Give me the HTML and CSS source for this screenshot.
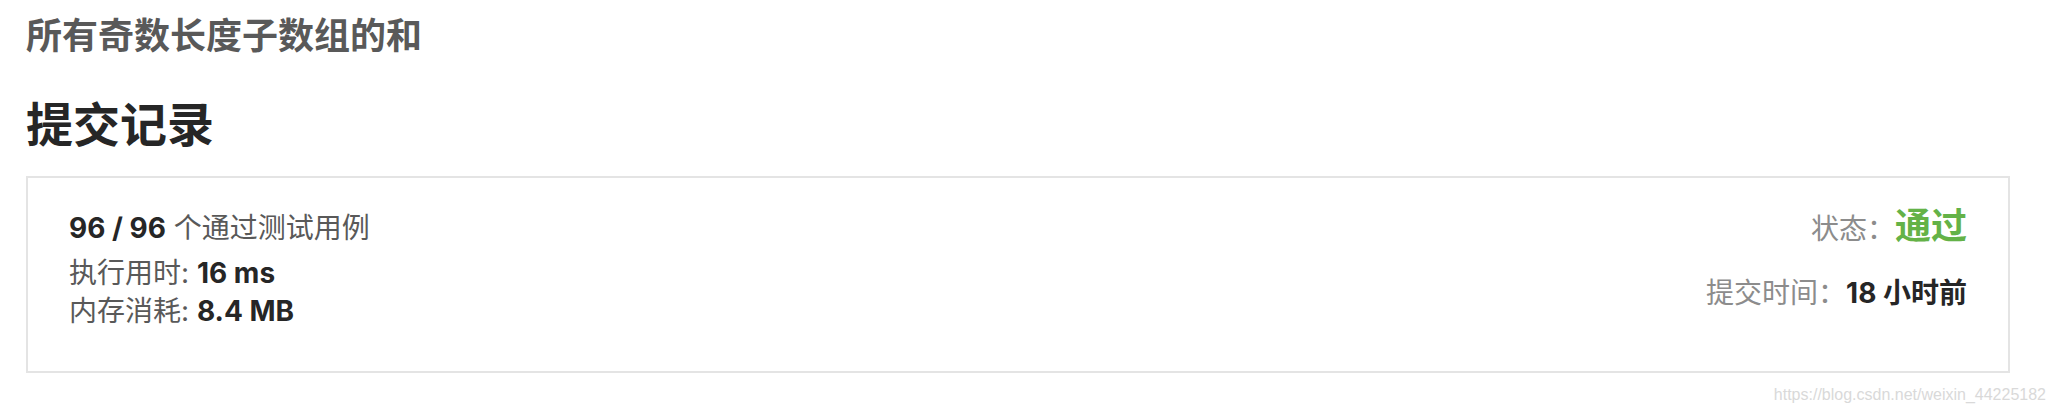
FILE: index.html
```html
<!DOCTYPE html>
<html lang="zh-CN">
<head>
    <meta charset="UTF-8">
    <meta name="viewport" content="width=device-width, initial-scale=1.0">
    <title>提交记录</title>
    <link rel="stylesheet" href="styles.css">
</head>
<body>
    <div class="page">
        <h1 class="problem-title">所有奇数长度子数组的和</h1>
        <h2 class="page-title">提交记录</h2>

        <div class="result-card">
            <div class="result-left">
                <div class="row first"><b>96 / 96</b> 个通过测试用例</div>
                <div class="row">执行用时: <b>16 ms</b></div>
                <div class="row">内存消耗: <b>8.4 MB</b></div>
            </div>
            <div class="result-right">
                <div class="status">状态：<span class="passed">通过</span></div>
                <div class="submit-time">提交时间：<b>18 小时前</b></div>
            </div>
        </div>

        <div class="watermark">https://blog.csdn.net/weixin_44225182</div>
    </div>
</body>
</html>
```

FILE: styles.css
```css
body {
    margin: 0;
    background-color: #fff;
    font-family: Inter, 'Noto Sans CJK SC', sans-serif;
    color: #262626;
}

.page {
    padding: 14px 46px 0 26px;
}

.problem-title {
    margin: 0;
    font-size: 36px;
    line-height: 44px;
    font-weight: 700;
    color: #595959;
}

.page-title {
    margin: 39px 0 0;
    font-size: 47px;
    line-height: 56px;
    font-weight: 700;
    color: #262626;
}

.result-card {
    margin-top: 23px;
    border: 2px solid #e4e4e4;
    padding: 31px 41px 41px 41px;
    display: flex;
    justify-content: space-between;
    align-items: flex-start;
}

.result-left .row {
    font-size: 28px;
    line-height: 38px;
    color: #595959;
}

.result-left .row.first {
    margin-bottom: 7px;
}

.result-left b,
.submit-time b {
    color: #262626;
    font-weight: 700;
}

.result-right {
    text-align: right;
    font-size: 28px;
    color: #8c8c8c;
}

.status {
    line-height: 34px;
}

.passed {
    font-size: 36px;
    font-weight: 700;
    color: #64b247;
}

.submit-time {
    margin-top: 28px;
    line-height: 38px;
}

.watermark {
    margin: 13px -36px 0 0;
    text-align: right;
    font-family: 'Liberation Sans', sans-serif;
    font-size: 16px;
    line-height: 18px;
    color: #d9d9d9;
}
```
